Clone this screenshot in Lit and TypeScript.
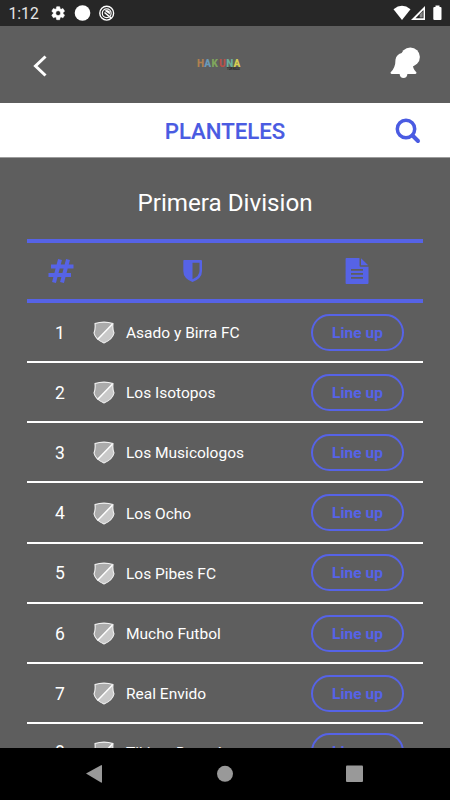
import { LitElement, html, css, svg } from "lit";
import { customElement } from "lit/decorators.js";

const teams = [
  "Asado y Birra FC",
  "Los Isotopos",
  "Los Musicologos",
  "Los Ocho",
  "Los Pibes FC",
  "Mucho Futbol",
  "Real Envido",
  "Tikitas Demoís",
];

const crest = html`<svg class="crest" width="22" height="23" viewBox="0 0 22 23">
  <path d="M2 2.600Q11-.4 20 2.600Q19.400 8 21 12Q19.500 18.500 11 22Q2.500 18.500 1 12Q2.600 8 2 2.600Z" fill="#c9c9c9"/>
  <path d="M2 2.600Q11-.4 20 2.600L4.500 18.600Q1.800 16 1 12Q2.600 8 2 2.600Z" fill="#ababab"/>
  <path d="M19.500 3L4.500 18.500" stroke="#fff" stroke-width="1.500"/>
  <path d="M2 2.600Q11-.4 20 2.600Q19.400 8 21 12Q19.500 18.500 11 22Q2.500 18.500 1 12Q2.600 8 2 2.600Z" fill="none" stroke="#f2f2f2" stroke-width="1.100"/>
</svg>`;

const logoLetters: [string, string][] = [
  ["H", "#b08050"],
  ["A", "#6a9ab8"],
  ["K", "#7fa55c"],
  ["U", "#b85048"],
  ["N", "#6bb09c"],
  ["A", "#d6cf52"],
];

@customElement("app-root")
export class AppRoot extends LitElement {
  static styles = css`
    :host {
      display: flex;
      flex-direction: column;
      width: 450px;
      height: 800px;
      overflow: hidden;
      background: #5e5e5e;
      color: #fff;
      font-family: Roboto, "Liberation Sans", sans-serif;
    }
    * { box-sizing: border-box; }
    svg { display: block; flex: none; }
    .status { height: 26px; background: #272727; flex: none; display: flex; }
    .header { height: 77px; flex: none; display: grid; grid-template-columns: 80px 1fr 80px; align-items: center; }
    .back { margin-left: 32px; margin-top: 2px; }
    .logo { justify-self: center; margin-right: 13px; margin-top: -2px; }
    .bell { margin-left: 19px; margin-top: -4px; }
    .bar {
      height: 55px;
      flex: none;
      background: #fff;
      border-bottom: 1px solid #9c9c9c;
      display: grid;
      grid-template-columns: 80px 1fr 80px;
      align-items: center;
      color: #4a5be2;
    }
    .bar-title { grid-column: 2; text-align: center; font-size: 22.200px; font-weight: 500; line-height: 26px; padding-top: 2px; -webkit-text-stroke: .15px #4a5be2; }
    .search { margin-left: 24px; margin-top: 1px; }
    .content { flex: 1; min-height: 0; overflow: hidden; padding: 0 27px; }
    .division { height: 81px; line-height: 90px; text-align: center; font-size: 24.200px; }
    .table-head {
      height: 64px;
      border-top: 4px solid #5663e6;
      border-bottom: 4px solid #5663e6;
      display: grid;
      grid-template-columns: 67px 197px 132px;
      align-items: center;
      justify-items: center;
    }
    .row {
      height: 60.200px;
      display: grid;
      grid-template-columns: 66px 33px 1fr 93px 19px;
      align-items: center;
      background: linear-gradient(#fff 0 70%, #444 70%) 0 100% / 100% 2.200px no-repeat;
    }
    .row:last-child { height: 57.200px; }
    .num { text-align: center; font-size: 17.500px; line-height: 20px; padding-bottom: 1px; }
    .team { font-size: 15.500px; line-height: 20px; white-space: nowrap; }
    .crest { margin-top: -1px; }
    .lineup {
      height: 37px;
      width: 93px;
      border: 2px solid #5663e6;
      border-radius: 19px;
      background: none;
      color: #5663e6;
      font: 700 15.500px/33px Roboto, sans-serif;
      text-align: center;
      padding: 1px 0 0;
      margin-top: -2px;
    }
    .nav { height: 52px; flex: none; background: #000; }
  `;

  render() {
    return html`
      <div class="status">
        <svg width="450" height="26" viewBox="0 0 450 26" fill="#fff">
          <text x="8.500" y="19" font-size="15.700" fill="#e8e8e8">1:12</text>
          <g transform="translate(50 5) scale(.68)">
            <path fill-rule="evenodd" stroke="#fff" stroke-width=".8" d="M19.140 12.940a7 7 0 0 0 0-1.880l2.030-1.580a.5.5 0 0 0 .12-.61l-1.920-3.320a.5.5 0 0 0-.59-.22l-2.390.96a7 7 0 0 0-1.620-.94l-.36-2.540a.5.5 0 0 0-.48-.41h-3.840a.5.5 0 0 0-.47.410l-.36 2.540a7 7 0 0 0-1.620.940l-2.390-.96a.5.5 0 0 0-.59.220L2.740 8.870a.5.5 0 0 0 .12.610l2.030 1.580a7 7 0 0 0 0 1.880l-2.030 1.580a.5.5 0 0 0-.12.610l1.920 3.320c.12.220.37.290.59.220l2.390-.96a7 7 0 0 0 1.620.940l.36 2.540c.05.240.24.410.48.410h3.840c.24 0 .44-.17.470-.41l.36-2.540a7 7 0 0 0 1.620-.94l2.390.96c.22.080.47 0 .59-.22l1.920-3.320a.5.5 0 0 0-.12-.61zM12 15.600a3.600 3.600 0 1 1 0-7.200 3.600 3.600 0 0 1 0 7.200z"/>
          </g>
          <circle cx="82.500" cy="13" r="7.800"/>
          <circle cx="106.700" cy="13.200" r="6.900" fill="none" stroke="#fff" stroke-width="1.400"/>
          <circle cx="106.700" cy="13.200" r="4.400" fill="none" stroke="#fff" stroke-width="1.200"/>
          <path d="M104.500 10.800Q107.500 8.800 109.800 11.500L110 14.500Z"/>
          <path d="M104.500 12.500L111 17.800" stroke="#fff" stroke-width="1.500"/>
          <path d="M393.500 9.200Q402 2.500 410.500 9.200L402 20Z"/>
          <path d="M411 20L425 6V20Z"/>
          <path d="M415.500 18.200L423.500 10V18.200Z" fill="#272727"/>
          <path d="M419.700 17.500V14.500L422.700 11.500V17.500Z" fill="#8a8a8a"/>
          <path d="M434.500 7H435.500V5.600H439.500V7H440.500Q441.500 7 441.500 8V19Q441.500 20 440.500 20H434.500Q433.300 20 433.300 19V8Q433.300 7 434.500 7Z"/>
        </svg>
      </div>
      <div class="header">
        <svg class="back" width="16" height="24" viewBox="0 0 16 24"><path d="M13.500 2.500L3.500 12L13.500 21.500" fill="none" stroke="#fff" stroke-width="3"/></svg>
        <svg class="logo" width="46" height="16" viewBox="0 0 46 16">
          ${logoLetters.map(([c, color], i) => svg`<text x=${1 + i * 7.3} y="10.500" font-size="10" font-weight="900" fill=${color}>${c}</text>`)}
          <text x="31" y="13.500" font-size="2.800" font-weight="700" fill="#242424">TORNEOS</text>
        </svg>
        <svg class="bell" width="34" height="34" viewBox="0 0 34 34" fill="#fff">
          <circle cx="21.300" cy="11" r="9.600"/>
          <path d="M1.500 26.500Q6.500 22 6.500 13.500Q7.500 8 13 7L24 17Q23 22 27.500 26.500Q27.500 28 26 28H3Q1.500 28 1.500 26.500Z"/>
          <path d="M10.500 27.500H18.500Q18 32 14.500 32Q11 32 10.500 27.500Z"/>
        </svg>
      </div>
      <div class="bar">
        <div class="bar-title">PLANTELES</div>
        <svg class="search" width="28" height="28" viewBox="0 0 28 28" fill="none" stroke="#4a5be2">
          <circle cx="12" cy="12" r="8.700" stroke-width="3.500"/>
          <path d="M18.500 18.500L24 24" stroke-width="4" stroke-linecap="round"/>
        </svg>
      </div>
      <div class="content">
        <div class="division">Primera Division</div>
        <div class="table-head">
          <svg width="26" height="24" viewBox="0 0 26 24" fill="none" stroke="#5663e6" stroke-width="4">
            <path d="M3 7.500H25.500M.5 16H23M12 .5L6 23.500M20 .5L14 23.500"/>
          </svg>
          <svg width="20" height="24" viewBox="0 0 20 24" fill="#5663e6">
            <path fill-rule="evenodd" d="M1 1H18Q19 1 19 2V12Q19 19.500 9.500 23Q.3 19.500 .3 12V2Q.3 1 1 1ZM9.500 3.700V20.300Q16.500 17 16.500 12V3.700Z"/>
          </svg>
          <svg width="24" height="28" viewBox="0 0 24 28" fill="#5663e6">
            <path fill-rule="evenodd" d="M1.500 1H14.500V8.500Q14.500 9.700 15.500 9.700H23.500V26Q23.500 27 22.500 27H1.500Q.6 27 .6 26V2Q.6 1 1.500 1ZM6 12V13.800H18V12ZM6 16V17.800H18V16ZM6 20V21.800H18V20Z"/>
            <path d="M16 1.200L23.200 8.200H16Z"/>
          </svg>
        </div>
        ${teams.map((team, i) => html`
          <div class="row">
            <span class="num">${i + 1}</span>
            ${crest}
            <span class="team">${team}</span>
            <button class="lineup">Line up</button>
          </div>`)}
      </div>
      <svg class="nav" width="450" height="52" viewBox="0 0 450 52" fill="#999">
        <path d="M86 25.600L101.500 17Q102 17 102 17.500V34Q102 35 101 34.500Z"/>
        <circle cx="225" cy="25.800" r="8"/>
        <rect x="346" y="17.500" width="17" height="16.500" rx="1"/>
      </svg>
    `;
  }
}
